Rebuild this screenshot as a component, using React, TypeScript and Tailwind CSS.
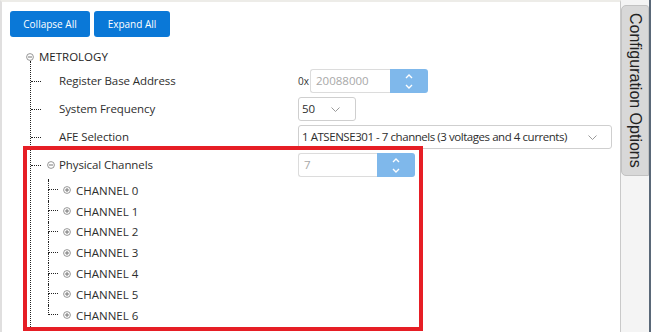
import React from "react";

function Toggle({ plus }: { plus?: boolean }) {
  return (
    <svg width="8" height="8" viewBox="0 0 8 8" className="shrink-0">
      <circle cx="4" cy="4" r="3.4" fill="none" stroke="#8a8a8a" strokeWidth="0.9" />
      <path d="M2 4h4" stroke="#6a6a6a" strokeWidth="0.9" />
      {plus && <path d="M4 2v4" stroke="#6a6a6a" strokeWidth="0.9" />}
    </svg>
  );
}

function Spinner() {
  return (
    <div className="h-6 w-[38px] bg-[#7fb8eb] rounded-r-[3px] flex flex-col items-center justify-center gap-[5px]">
      <svg width="8" height="5" viewBox="0 0 8 5">
        <path d="M1 4l3-3 3 3" fill="none" stroke="#fff" strokeWidth="1.4" />
      </svg>
      <svg width="8" height="5" viewBox="0 0 8 5">
        <path d="M1 1l3 3 3-3" fill="none" stroke="#fff" strokeWidth="1.4" />
      </svg>
    </div>
  );
}

function Chevron() {
  return (
    <svg width="9" height="5" viewBox="0 0 9 5" className="shrink-0">
      <path d="M0.5 0.5l4 4 4-4" fill="none" stroke="#8f8f8f" strokeWidth="0.9" />
    </svg>
  );
}

function Row({ label, icon, children }: { label: string; icon?: boolean; children?: React.ReactNode }) {
  return (
    <div className="flex items-center h-[28px]">
      <div className="w-[10px] border-t border-dotted border-[#222]" />
      <div className="w-[18px] flex items-center pl-[6px]">{icon && <Toggle />}</div>
      <div className="w-[239px] text-[#2e2e2e] tracking-[-0.1px]">{label}</div>
      {children}
    </div>
  );
}

function Channel({ n, last }: { n: number; last?: boolean }) {
  return (
    <div className="flex h-[20.8px]">
      <div className="w-[10px] flex flex-col">
        <div className="h-1/2 border-l border-b border-dotted border-[#222]" />
        <div className={`h-1/2 ${last ? "" : "border-l border-dotted border-[#222]"}`} />
      </div>
      <div className="flex items-center pl-[5px] gap-[5px] text-[#2e2e2e]">
        <Toggle plus />
        <span>CHANNEL {n}</span>
      </div>
    </div>
  );
}

export default function App() {
  return (
    <div className="relative w-[651px] h-[332px] flex overflow-hidden bg-[#f4f4f4] font-['Open_Sans',sans-serif] text-[11.5px]">
      <div className="w-[621px] h-full bg-white border-l-2 border-t-2 border-l-[#e0dfdf] border-t-[#edece8] border-r border-r-[#c9c9c9] overflow-hidden">
        <div className="flex gap-1 pl-2 pt-[9px]">
          <button className="h-[26px] w-[80px] bg-[#0a78d7] text-white text-[10px] rounded-[3px]">Collapse All</button>
          <button className="h-[26px] w-[76px] bg-[#0a78d7] text-white text-[10px] rounded-[3px]">Expand All</button>
        </div>
        <div className="mt-[10px] h-[20px] flex items-center gap-[5px] ml-[24px] text-[#1e1e1e]">
          <Toggle />
          <span>METROLOGY</span>
        </div>
        <div className="ml-[28px] -mt-[6px] pt-[6px] border-l border-dotted border-[#222] h-[300px]">
          <Row label="Register Base Address">
            <div className="flex items-center">
              <span className="text-[10px] text-[#333] w-[12px]">0x</span>
              <div className="h-6 w-[80px] border border-r-0 border-[#dcdcdc] rounded-l-[3px] flex items-center pl-[5px] text-[#a8a8a8]">
                20088000
              </div>
              <Spinner />
            </div>
          </Row>
          <Row label="System Frequency">
            <div className="h-6 w-[58px] border border-[#cfcfcf] rounded-[3px] flex items-center justify-between pl-[3px] pr-[15px] text-[#2e2e2e]">
              <span>50</span>
              <Chevron />
            </div>
          </Row>
          <Row label="AFE Selection">
            <div className="h-6 w-[314px] border border-[#cfcfcf] rounded-[3px] flex items-center justify-between pl-[3px] pr-[14px] text-[#2e2e2e]">
              <span className="whitespace-nowrap tracking-[-0.45px]">1 ATSENSE301 - 7 channels (3 voltages and 4 currents)</span>
              <Chevron />
            </div>
          </Row>
          <Row label="Physical Channels" icon>
            <div className="flex items-center">
              <div className="h-6 w-[79px] border border-r-0 border-[#dcdcdc] rounded-l-[3px] flex items-center pl-[5px] text-[#a8a8a8]">
                7
              </div>
              <Spinner />
            </div>
          </Row>
          <div className="ml-[17px] flex flex-col">
            <div className="h-px border-l border-dotted border-[#222]" />
            {[0, 1, 2, 3, 4, 5, 6].map((n) => (
              <Channel key={n} n={n} last={n === 6} />
            ))}
          </div>
        </div>
      </div>
      <div className="flex-1 pt-[5px]">
        <div className="h-[171px] bg-[#d8d8d8] border border-[#c2c2c2] rounded-l-[5px] rounded-tr-[3px] flex justify-center pt-[7px]">
          <span className="[writing-mode:vertical-rl] font-['Liberation_Sans',Arial,sans-serif] text-[16px] text-[#222] leading-none">
            Configuration Options
          </span>
        </div>
      </div>
      <div className="w-[2px] bg-[#5a6878]" />
      <div className="absolute left-[23px] top-[146px] w-[400px] h-[185px] border-4 border-[#e61e25] pointer-events-none" />
    </div>
  );
}
